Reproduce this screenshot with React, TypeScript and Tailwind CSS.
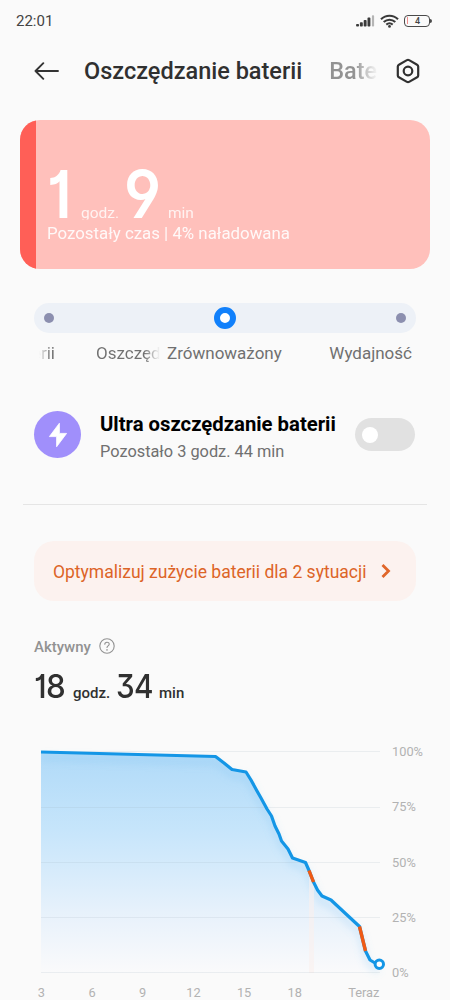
import React from 'react';

const linePoints: [number, number][] = [
  [41, 12], [215.5, 16.5], [224, 23], [232, 29.5], [246, 32], [251, 40],
  [257, 51], [261, 58], [267, 69], [271.5, 76], [275, 86], [279, 94],
  [281.5, 101], [288, 109], [292.5, 118], [305.5, 122.5], [309, 130.5],
  [313.5, 142], [317.5, 150], [322, 156], [331, 160], [346, 174],
  [359.5, 186.5], [365.5, 211], [370, 220], [375, 223], [379, 224.5],
];

const toPath = (points: [number, number][]) =>
  points.map(([x, y], i) => `${i === 0 ? 'M' : 'L'}${x} ${y}`).join(' ');

const gridLines = [11.5, 67.5, 122.5, 177.5, 232.5];
const percents = ['100%', '75%', '50%', '25%', '0%'];
const hours = ['3', '6', '9', '12', '15', '18'];

const StatusBar: React.FC = () => (
  <div className="flex h-[41px] shrink-0 items-center justify-between pl-4 pr-[18px] text-[#444]">
    <span className="pt-px text-[15px] leading-none">22:01</span>
    <div className="flex items-center gap-[5px]">
      {/* Signal */}
      <svg width="19" height="12" viewBox="0 0 19 12" fill="#3a3a3a">
        <rect x="0.1" y="9" width="2.9" height="2.6" rx="0.8" />
        <rect x="3.9" y="7.2" width="2.9" height="4.4" rx="0.8" />
        <rect x="7.7" y="5" width="2.9" height="6.6" rx="0.8" />
        <rect x="11.5" y="2.6" width="2.9" height="9" rx="0.8" />
        <rect x="15.9" y="0.2" width="2.2" height="11.4" rx="0.8" fill="#b5b5b5" />
      </svg>
      {/* Wi-Fi */}
      <svg width="19" height="14" viewBox="0 0 19 14" fill="none" stroke="#3a3a3a" strokeWidth="2.1">
        <path d="M1 5.3C5.8 0.6 13.2 0.6 18 5.3" />
        <path d="M3.7 8C7.1 4.9 11.9 4.9 15.3 8" />
        <path d="M6.3 10.6C8.2 9 10.8 9 12.7 10.6" />
        <circle cx="9.5" cy="12.4" r="1.4" fill="#3a3a3a" stroke="none" />
      </svg>
      {/* Battery */}
      <div className="flex items-center">
        <div className="flex h-3 w-[26px] items-center rounded-[4px] border border-[#4a4a4a] pl-0.5">
          <span className="h-[7px] w-px bg-[#ef8d8d]" />
          <span className="flex-1 pr-0.5 pt-px text-center text-[9px] font-medium leading-none">4</span>
        </div>
        <span className="h-1 w-[2px] rounded-r bg-[#4a4a4a]" />
      </div>
    </div>
  </div>
);

const Header: React.FC = () => (
  <div className="flex h-[61px] shrink-0 items-center pl-[34px] pr-[30px]">
    <svg className="-mt-0.5" width="26" height="18" viewBox="0 0 26 18" fill="none" stroke="#333" strokeWidth="1.9" strokeLinecap="round" strokeLinejoin="round">
      <path d="M24 9H1.5M9.3 1.2L1.5 9L9.3 16.8" />
    </svg>
    <h1 className="ml-6 whitespace-nowrap pt-px text-[23.5px] font-medium text-[#303030]">Oszczędzanie baterii</h1>
    <div className="ml-[27px] w-[50px] overflow-hidden whitespace-nowrap bg-gradient-to-r from-[#929292] from-50% to-transparent to-98% bg-clip-text pt-px text-[23.5px] font-medium text-transparent">
      Bateria
    </div>
    <svg className="ml-auto -mt-0.5" width="24" height="26" viewBox="0 0 24 26" fill="none" stroke="#303030" strokeWidth="2.2" strokeLinejoin="round">
      <path d="M10.9 2.1Q12 1.5 13.1 2.1L21.1 6.7Q22.2 7.3 22.2 8.6V17.4Q22.2 18.7 21.1 19.3L13.1 23.9Q12 24.5 10.9 23.9L2.9 19.3Q1.8 18.7 1.8 17.4V8.6Q1.8 7.3 2.9 6.7Z" />
      <circle cx="12" cy="13" r="4.3" />
    </svg>
  </div>
);

const BatteryCard: React.FC = () => (
  <div className="mx-5 mt-[18px] flex h-[149px] shrink-0 overflow-hidden rounded-[20px] bg-[#ffc0bb]">
    <div className="w-4 shrink-0 bg-[#ff5f57]" />
    <div className="flex flex-col pl-[11px] pt-[44px] text-white">
      <div className="flex h-[58px] items-baseline">
        <span className="w-[34px] origin-left scale-x-90 font-['Inter',sans-serif] text-[66px] font-semibold leading-[60px] [font-feature-settings:'cv01','cv04','cv09']">1</span>
        <span className="w-[43px] text-[15.5px] leading-none opacity-80 [clip-path:inset(0_0_2px_0)]">godz.</span>
        <span className="w-[44px] origin-left scale-x-93 font-['Inter',sans-serif] text-[66px] font-semibold leading-[60px] [font-feature-settings:'cv01','cv04','cv09']">9</span>
        <span className="text-[15.5px] leading-none opacity-80">min</span>
      </div>
      <p className="whitespace-nowrap text-[16.85px] leading-[22px] opacity-90">Pozostały czas | 4% naładowana</p>
    </div>
  </div>
);

const ModeSlider: React.FC = () => (
  <div className="mx-[34px] mt-[34px] shrink-0">
    <div className="flex h-[30px] items-center justify-between rounded-full bg-[#edf1f7] px-2.5">
      <span className="size-2.5 rounded-full bg-[#8c8faf]" />
      <span className="size-[22px] rounded-full border-[6px] border-[#1180fb] bg-white" />
      <span className="size-2.5 rounded-full bg-[#8c8faf]" />
    </div>
    <div className="mb-px mt-[9px] flex h-[22px] whitespace-nowrap text-[17px] leading-[22px] text-[#707070]">
      <div className="flex w-[21px] justify-end overflow-hidden bg-gradient-to-r from-transparent from-25% to-[#707070] to-80% bg-clip-text text-transparent">
        <span>baterii</span>
      </div>
      <div className="ml-[41px] w-[64px] overflow-hidden bg-gradient-to-r from-[#707070] from-75% to-transparent bg-clip-text text-transparent">
        Oszczędzanie
      </div>
      <span className="ml-[7px]">Zrównoważony</span>
      <span className="ml-auto mr-1">Wydajność</span>
    </div>
  </div>
);

const UltraSaver: React.FC = () => (
  <div className="mx-[34px] mt-[46px] flex h-[47px] shrink-0 items-center">
    <div className="flex size-[47px] shrink-0 items-center justify-center rounded-full bg-[#a08ffb]">
      <svg width="20" height="26" viewBox="0 0 20 26" fill="#fff" stroke="#fff" strokeWidth="0.8" strokeLinejoin="round">
        <path d="M11.4 1.2L1.4 14.6H8.6V24.8L18.6 11.4H11.4Z" />
      </svg>
    </div>
    <div className="ml-[19px] whitespace-nowrap pt-[6px]">
      <h2 className="text-[20.3px] font-bold leading-[27px] text-black">Ultra oszczędzanie baterii</h2>
      <p className="text-[16.35px] leading-[27px] text-[#707070]">Pozostało 3 godz. 44 min</p>
    </div>
    <button className="ml-auto mr-px flex h-[33px] w-[60px] shrink-0 items-center rounded-full bg-[#e1e1e1] pl-[7px]">
      <span className="size-4 rounded-full bg-white" />
    </button>
  </div>
);

const Optimize: React.FC = () => (
  <button className="mx-[34px] mt-[36px] flex h-[60px] shrink-0 items-center whitespace-nowrap rounded-[20px] bg-[#fcf2ef] pl-[19px] text-[17.5px] text-[#dd6427]">
    <span className="pt-0.5">Optymalizuj zużycie baterii dla 2 sytuacji</span>
    <svg className="ml-[15px]" width="10" height="15" viewBox="0 0 10 15" fill="none" stroke="#e0662a" strokeWidth="2.8">
      <path d="M1.5 1L7.5 7L1.5 13" />
    </svg>
  </button>
);

const ActiveTime: React.FC = () => (
  <div className="ml-[34px] mt-[36px] shrink-0">
    <div className="flex h-5 items-center text-[15px] font-medium text-[#929292]">
      Aktywny
      <svg className="-mt-0.5 ml-2" width="16" height="16" viewBox="0 0 16 16" fill="none" stroke="#929292" strokeWidth="1.1" strokeLinecap="round">
        <circle cx="8" cy="8" r="7.2" />
        <path d="M5.8 6.3C5.8 3.5 10.2 3.5 10.2 6.2C10.2 7.8 8 7.9 8 9.5" />
        <circle cx="8" cy="11.8" r="0.3" />
      </svg>
    </div>
    <div className="mt-[9px] flex h-10 items-baseline whitespace-nowrap text-[#303030]">
      <span className="w-[39px] origin-left scale-x-95 font-['Inter',sans-serif] text-[33px] font-medium leading-10 tracking-tight [font-feature-settings:'cv01','cv04','cv09']">18</span>
      <span className="w-[43px] text-[15px] font-medium">godz.</span>
      <span className="w-[43px] origin-left scale-x-90 font-['Inter',sans-serif] text-[33px] font-medium leading-10 tracking-tight [font-feature-settings:'cv01','cv04','cv09']">34</span>
      <span className="text-[15px] font-medium">min</span>
    </div>
  </div>
);

const BatteryChart: React.FC = () => (
  <div className="mt-[34px] shrink-0 text-[12.8px] text-[#b2b2b2]">
    <div className="flex h-[240px]">
      <svg className="shrink-0" width="392" height="240" viewBox="0 0 392 240" fill="none">
        <defs>
          <linearGradient id="fill" x1="0" y1="12" x2="0" y2="233" gradientUnits="userSpaceOnUse">
            <stop offset="0" stopColor="#b0daf8" />
            <stop offset="0.35" stopColor="#c6e5fb" />
            <stop offset="0.75" stopColor="#e9f2fb" />
            <stop offset="1" stopColor="#fafafb" />
          </linearGradient>
          <filter id="glow" x="-10%" y="-10%" width="120%" height="130%">
            <feGaussianBlur stdDeviation="3.5" />
          </filter>
        </defs>
        <path d={`${toPath(linePoints)} L379 233 L41 233 Z`} fill="url(#fill)" />
        <path d={toPath(linePoints)} transform="translate(0 6)" stroke="#78bdf0" strokeOpacity="0.22" strokeWidth="6" filter="url(#glow)" />
        <rect x="0" y="0" width="41" height="240" fill="#fafafa" />
        <path d="M309 131L314 143V233H309Z" fill="#faf0ef" fillOpacity="0.6" />
        {gridLines.map((y) => (
          <path key={y} d={`M41 ${y}H380`} stroke="#8ca0b4" strokeOpacity="0.14" />
        ))}
        <path d={toPath(linePoints)} stroke="#1496e6" strokeWidth="3.2" strokeLinejoin="round" />
        <path d={toPath(linePoints.slice(16, 18))} stroke="#f05a14" strokeWidth="3.4" />
        <path d={toPath(linePoints.slice(22, 24))} stroke="#f05a14" strokeWidth="3.4" />
        <circle cx="379.3" cy="224.3" r="4.2" fill="#fff" stroke="#1496e6" strokeWidth="3" />
      </svg>
      <div className="flex h-[242px] shrink-0 flex-col justify-between pt-[3px]">
        {percents.map((p) => (
          <span key={p} className="leading-[18px]">{p}</span>
        ))}
      </div>
    </div>
    <div className="flex h-5 items-center pl-[16px] pt-[5px] text-center leading-4">
      {hours.map((h) => (
        <span key={h} className="w-[50.7px]">{h}</span>
      ))}
      <span className="ml-[28px]">Teraz</span>
    </div>
  </div>
);

const App: React.FC = () => (
  <div className="flex h-[1000px] w-[450px] flex-col overflow-hidden bg-[#fafafa] font-['Roboto',sans-serif]">
    <StatusBar />
    <Header />
    <BatteryCard />
    <ModeSlider />
    <UltraSaver />
    <div className="ml-[23px] mr-[23px] mt-[46px] h-px shrink-0 bg-[#e5e5e5]" />
    <Optimize />
    <ActiveTime />
    <BatteryChart />
  </div>
);

export default App;
